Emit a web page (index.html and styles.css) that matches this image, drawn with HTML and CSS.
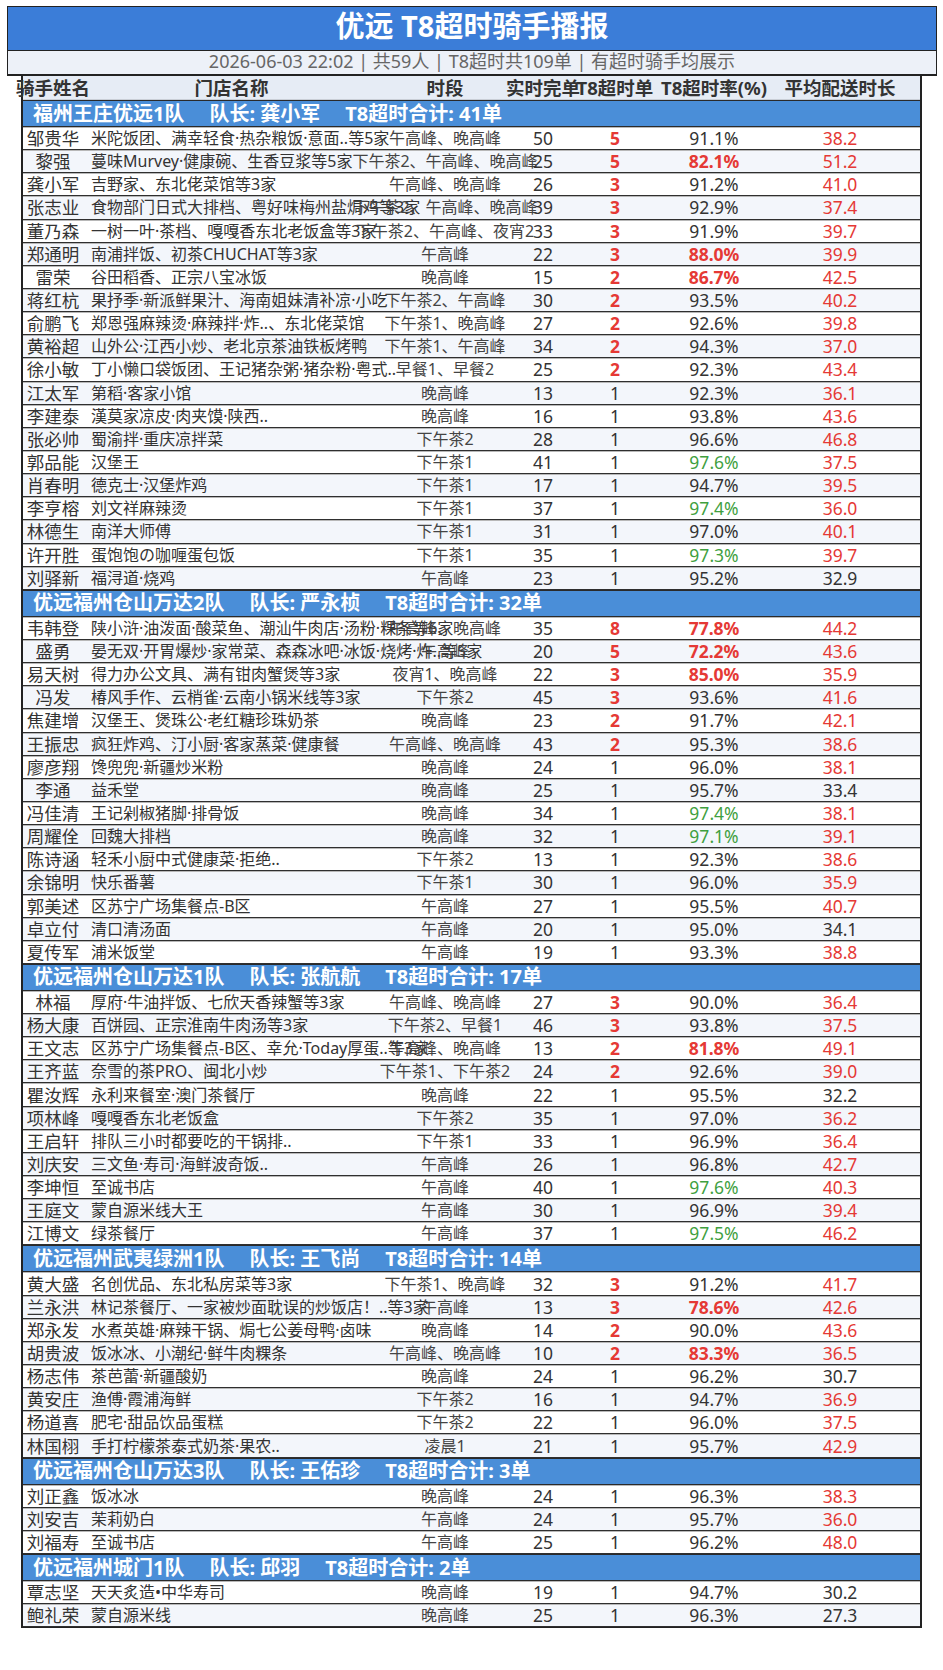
FILE: index.html
```html
<!DOCTYPE html>
<html lang="zh-CN">
<head>
<meta charset="utf-8">
<title>优远 T8超时骑手播报</title>
<link rel="stylesheet" href="styles.css">
</head>
<body>
<div class="page">
  <div class="title">优远 T8超时骑手播报</div>
  <div class="sub">2026-06-03 22:02 | 共59人 | T8超时共109单 | 有超时骑手均展示</div>
  <div class="table">
    <div class="head">
      <span class="c n">骑手姓名</span><span class="c s">门店名称</span><span class="c t">时段</span><span class="c q">实时完单</span><span class="c o">T8超时单</span><span class="c p">T8超时率(%)</span><span class="c v">平均配送时长</span>
    </div>

    <div class="grp"><span>福州王庄优远1队</span><span class="gap">队长: 龚小军</span><span class="gap">T8超时合计: 41单</span></div>
    <div class="row"><span class="c n">邹贵华</span><span class="c s">米陀饭团、满幸轻食·热杂粮饭·意面..等5家</span><span class="c t">午高峰、晚高峰</span><span class="c q">50</span><span class="c o hot">5</span><span class="c p">91.1%</span><span class="c v red">38.2</span></div>
    <div class="row alt"><span class="c n">黎强</span><span class="c s">蔓味Murvey·健康碗、生香豆浆等5家</span><span class="c t">下午茶2、午高峰、晚高峰</span><span class="c q">25</span><span class="c o hot">5</span><span class="c p hot">82.1%</span><span class="c v red">51.2</span></div>
    <div class="row"><span class="c n">龚小军</span><span class="c s">吉野家、东北佬菜馆等3家</span><span class="c t">午高峰、晚高峰</span><span class="c q">26</span><span class="c o hot">3</span><span class="c p">91.2%</span><span class="c v red">41.0</span></div>
    <div class="row alt"><span class="c n">张志业</span><span class="c s">食物部门日式大排档、粤好味梅州盐焗鸡等3家</span><span class="c t">下午茶2、午高峰、晚高峰</span><span class="c q">39</span><span class="c o hot">3</span><span class="c p">92.9%</span><span class="c v red">37.4</span></div>
    <div class="row"><span class="c n">董乃森</span><span class="c s">一树一叶·茶档、嘎嘎香东北老饭盒等3家</span><span class="c t">下午茶2、午高峰、夜宵2</span><span class="c q">33</span><span class="c o hot">3</span><span class="c p">91.9%</span><span class="c v red">39.7</span></div>
    <div class="row alt"><span class="c n">郑通明</span><span class="c s">南浦拌饭、初茶CHUCHAT等3家</span><span class="c t">午高峰</span><span class="c q">22</span><span class="c o hot">3</span><span class="c p hot">88.0%</span><span class="c v red">39.9</span></div>
    <div class="row"><span class="c n">雷荣</span><span class="c s">谷田稻香、正宗八宝冰饭</span><span class="c t">晚高峰</span><span class="c q">15</span><span class="c o hot">2</span><span class="c p hot">86.7%</span><span class="c v red">42.5</span></div>
    <div class="row alt"><span class="c n">蒋红杭</span><span class="c s">果抒季·新派鲜果汁、海南姐妹清补凉·小吃</span><span class="c t">下午茶2、午高峰</span><span class="c q">30</span><span class="c o hot">2</span><span class="c p">93.5%</span><span class="c v red">40.2</span></div>
    <div class="row"><span class="c n">俞鹏飞</span><span class="c s">郑恩强麻辣烫·麻辣拌·炸..、东北佬菜馆</span><span class="c t">下午茶1、晚高峰</span><span class="c q">27</span><span class="c o hot">2</span><span class="c p">92.6%</span><span class="c v red">39.8</span></div>
    <div class="row alt"><span class="c n">黄裕超</span><span class="c s">山外公·江西小炒、老北京茶油铁板烤鸭</span><span class="c t">下午茶1、午高峰</span><span class="c q">34</span><span class="c o hot">2</span><span class="c p">94.3%</span><span class="c v red">37.0</span></div>
    <div class="row"><span class="c n">徐小敏</span><span class="c s">丁小懒口袋饭团、王记猪杂粥·猪杂粉·粤式..</span><span class="c t">早餐1、早餐2</span><span class="c q">25</span><span class="c o hot">2</span><span class="c p">92.3%</span><span class="c v red">43.4</span></div>
    <div class="row alt"><span class="c n">江太军</span><span class="c s">第稻·客家小馆</span><span class="c t">晚高峰</span><span class="c q">13</span><span class="c o">1</span><span class="c p">92.3%</span><span class="c v red">36.1</span></div>
    <div class="row"><span class="c n">李建泰</span><span class="c s">漢莫家凉皮·肉夹馍·陕西..</span><span class="c t">晚高峰</span><span class="c q">16</span><span class="c o">1</span><span class="c p">93.8%</span><span class="c v red">43.6</span></div>
    <div class="row alt"><span class="c n">张必帅</span><span class="c s">蜀渝拌·重庆凉拌菜</span><span class="c t">下午茶2</span><span class="c q">28</span><span class="c o">1</span><span class="c p">96.6%</span><span class="c v red">46.8</span></div>
    <div class="row"><span class="c n">郭品能</span><span class="c s">汉堡王</span><span class="c t">下午茶1</span><span class="c q">41</span><span class="c o">1</span><span class="c p grn">97.6%</span><span class="c v red">37.5</span></div>
    <div class="row alt"><span class="c n">肖春明</span><span class="c s">德克士·汉堡炸鸡</span><span class="c t">下午茶1</span><span class="c q">17</span><span class="c o">1</span><span class="c p">94.7%</span><span class="c v red">39.5</span></div>
    <div class="row"><span class="c n">李亨榕</span><span class="c s">刘文祥麻辣烫</span><span class="c t">下午茶1</span><span class="c q">37</span><span class="c o">1</span><span class="c p grn">97.4%</span><span class="c v red">36.0</span></div>
    <div class="row alt"><span class="c n">林德生</span><span class="c s">南洋大师傅</span><span class="c t">下午茶1</span><span class="c q">31</span><span class="c o">1</span><span class="c p">97.0%</span><span class="c v red">40.1</span></div>
    <div class="row"><span class="c n">许开胜</span><span class="c s">蛋饱饱の咖喱蛋包饭</span><span class="c t">下午茶1</span><span class="c q">35</span><span class="c o">1</span><span class="c p grn">97.3%</span><span class="c v red">39.7</span></div>
    <div class="row alt"><span class="c n">刘驿新</span><span class="c s">福浔道·烧鸡</span><span class="c t">午高峰</span><span class="c q">23</span><span class="c o">1</span><span class="c p">95.2%</span><span class="c v">32.9</span></div>

    <div class="grp"><span>优远福州仓山万达2队</span><span class="gap">队长: 严永桢</span><span class="gap">T8超时合计: 32单</span></div>
    <div class="row"><span class="c n">韦韩登</span><span class="c s">陕小浒·油泼面·酸菜鱼、潮汕牛肉店·汤粉·粿条等6家</span><span class="c t">午高峰、晚高峰</span><span class="c q">35</span><span class="c o hot">8</span><span class="c p hot">77.8%</span><span class="c v red">44.2</span></div>
    <div class="row alt"><span class="c n">盛勇</span><span class="c s">晏无双·开胃爆炒·家常菜、森森冰吧·冰饭·烧烤·炸..等5家</span><span class="c t">午高峰</span><span class="c q">20</span><span class="c o hot">5</span><span class="c p hot">72.2%</span><span class="c v red">43.6</span></div>
    <div class="row"><span class="c n">易天树</span><span class="c s">得力办公文具、满有钳肉蟹煲等3家</span><span class="c t">夜宵1、晚高峰</span><span class="c q">22</span><span class="c o hot">3</span><span class="c p hot">85.0%</span><span class="c v red">35.9</span></div>
    <div class="row alt"><span class="c n">冯发</span><span class="c s">椿风手作、云梢雀·云南小锅米线等3家</span><span class="c t">下午茶2</span><span class="c q">45</span><span class="c o hot">3</span><span class="c p">93.6%</span><span class="c v red">41.6</span></div>
    <div class="row"><span class="c n">焦建增</span><span class="c s">汉堡王、煲珠公·老红糖珍珠奶茶</span><span class="c t">晚高峰</span><span class="c q">23</span><span class="c o hot">2</span><span class="c p">91.7%</span><span class="c v red">42.1</span></div>
    <div class="row alt"><span class="c n">王振忠</span><span class="c s">疯狂炸鸡、汀小厨·客家蒸菜·健康餐</span><span class="c t">午高峰、晚高峰</span><span class="c q">43</span><span class="c o hot">2</span><span class="c p">95.3%</span><span class="c v red">38.6</span></div>
    <div class="row"><span class="c n">廖彦翔</span><span class="c s">馋兜兜·新疆炒米粉</span><span class="c t">晚高峰</span><span class="c q">24</span><span class="c o">1</span><span class="c p">96.0%</span><span class="c v red">38.1</span></div>
    <div class="row alt"><span class="c n">李通</span><span class="c s">益禾堂</span><span class="c t">晚高峰</span><span class="c q">25</span><span class="c o">1</span><span class="c p">95.7%</span><span class="c v">33.4</span></div>
    <div class="row"><span class="c n">冯佳清</span><span class="c s">王记剁椒猪脚·排骨饭</span><span class="c t">晚高峰</span><span class="c q">34</span><span class="c o">1</span><span class="c p grn">97.4%</span><span class="c v red">38.1</span></div>
    <div class="row alt"><span class="c n">周耀佺</span><span class="c s">回魏大排档</span><span class="c t">晚高峰</span><span class="c q">32</span><span class="c o">1</span><span class="c p grn">97.1%</span><span class="c v red">39.1</span></div>
    <div class="row"><span class="c n">陈诗涵</span><span class="c s">轻禾小厨中式健康菜·拒绝..</span><span class="c t">下午茶2</span><span class="c q">13</span><span class="c o">1</span><span class="c p">92.3%</span><span class="c v red">38.6</span></div>
    <div class="row alt"><span class="c n">余锦明</span><span class="c s">快乐番薯</span><span class="c t">下午茶1</span><span class="c q">30</span><span class="c o">1</span><span class="c p">96.0%</span><span class="c v red">35.9</span></div>
    <div class="row"><span class="c n">郭美述</span><span class="c s">区苏宁广场集餐点-B区</span><span class="c t">午高峰</span><span class="c q">27</span><span class="c o">1</span><span class="c p">95.5%</span><span class="c v red">40.7</span></div>
    <div class="row alt"><span class="c n">卓立付</span><span class="c s">清口清汤面</span><span class="c t">午高峰</span><span class="c q">20</span><span class="c o">1</span><span class="c p">95.0%</span><span class="c v">34.1</span></div>
    <div class="row"><span class="c n">夏传军</span><span class="c s">浦米饭堂</span><span class="c t">午高峰</span><span class="c q">19</span><span class="c o">1</span><span class="c p">93.3%</span><span class="c v red">38.8</span></div>

    <div class="grp"><span>优远福州仓山万达1队</span><span class="gap">队长: 张航航</span><span class="gap">T8超时合计: 17单</span></div>
    <div class="row"><span class="c n">林福</span><span class="c s">厚府·牛油拌饭、七欣天香辣蟹等3家</span><span class="c t">午高峰、晚高峰</span><span class="c q">27</span><span class="c o hot">3</span><span class="c p">90.0%</span><span class="c v red">36.4</span></div>
    <div class="row alt"><span class="c n">杨大康</span><span class="c s">百饼园、正宗淮南牛肉汤等3家</span><span class="c t">下午茶2、早餐1</span><span class="c q">46</span><span class="c o hot">3</span><span class="c p">93.8%</span><span class="c v red">37.5</span></div>
    <div class="row"><span class="c n">王文志</span><span class="c s">区苏宁广场集餐点-B区、幸允·Today厚蛋..等3家</span><span class="c t">午高峰、晚高峰</span><span class="c q">13</span><span class="c o hot">2</span><span class="c p hot">81.8%</span><span class="c v red">49.1</span></div>
    <div class="row alt"><span class="c n">王齐蓝</span><span class="c s">奈雪的茶PRO、闽北小炒</span><span class="c t">下午茶1、下午茶2</span><span class="c q">24</span><span class="c o hot">2</span><span class="c p">92.6%</span><span class="c v red">39.0</span></div>
    <div class="row"><span class="c n">瞿汝辉</span><span class="c s">永利来餐室·澳门茶餐厅</span><span class="c t">晚高峰</span><span class="c q">22</span><span class="c o">1</span><span class="c p">95.5%</span><span class="c v">32.2</span></div>
    <div class="row alt"><span class="c n">项林峰</span><span class="c s">嘎嘎香东北老饭盒</span><span class="c t">下午茶2</span><span class="c q">35</span><span class="c o">1</span><span class="c p">97.0%</span><span class="c v red">36.2</span></div>
    <div class="row"><span class="c n">王启轩</span><span class="c s">排队三小时都要吃的干锅排..</span><span class="c t">下午茶1</span><span class="c q">33</span><span class="c o">1</span><span class="c p">96.9%</span><span class="c v red">36.4</span></div>
    <div class="row alt"><span class="c n">刘庆安</span><span class="c s">三文鱼·寿司·海鲜波奇饭..</span><span class="c t">午高峰</span><span class="c q">26</span><span class="c o">1</span><span class="c p">96.8%</span><span class="c v red">42.7</span></div>
    <div class="row"><span class="c n">李坤恒</span><span class="c s">至诚书店</span><span class="c t">午高峰</span><span class="c q">40</span><span class="c o">1</span><span class="c p grn">97.6%</span><span class="c v red">40.3</span></div>
    <div class="row alt"><span class="c n">王庭文</span><span class="c s">蒙自源米线大王</span><span class="c t">午高峰</span><span class="c q">30</span><span class="c o">1</span><span class="c p">96.9%</span><span class="c v red">39.4</span></div>
    <div class="row"><span class="c n">江博文</span><span class="c s">绿茶餐厅</span><span class="c t">午高峰</span><span class="c q">37</span><span class="c o">1</span><span class="c p grn">97.5%</span><span class="c v red">46.2</span></div>

    <div class="grp"><span>优远福州武夷绿洲1队</span><span class="gap">队长: 王飞尚</span><span class="gap">T8超时合计: 14单</span></div>
    <div class="row"><span class="c n">黄大盛</span><span class="c s">名创优品、东北私房菜等3家</span><span class="c t">下午茶1、晚高峰</span><span class="c q">32</span><span class="c o hot">3</span><span class="c p">91.2%</span><span class="c v red">41.7</span></div>
    <div class="row alt"><span class="c n">兰永洪</span><span class="c s">林记茶餐厅、一家被炒面耽误的炒饭店！..等3家</span><span class="c t">午高峰</span><span class="c q">13</span><span class="c o hot">3</span><span class="c p hot">78.6%</span><span class="c v red">42.6</span></div>
    <div class="row"><span class="c n">郑永发</span><span class="c s">水煮英雄·麻辣干锅、焗七公姜母鸭·卤味</span><span class="c t">晚高峰</span><span class="c q">14</span><span class="c o hot">2</span><span class="c p">90.0%</span><span class="c v red">43.6</span></div>
    <div class="row alt"><span class="c n">胡贵波</span><span class="c s">饭冰冰、小潮纪·鲜牛肉粿条</span><span class="c t">午高峰、晚高峰</span><span class="c q">10</span><span class="c o hot">2</span><span class="c p hot">83.3%</span><span class="c v red">36.5</span></div>
    <div class="row"><span class="c n">杨志伟</span><span class="c s">茶芭蕾·新疆酸奶</span><span class="c t">晚高峰</span><span class="c q">24</span><span class="c o">1</span><span class="c p">96.2%</span><span class="c v">30.7</span></div>
    <div class="row alt"><span class="c n">黄安庄</span><span class="c s">渔傅·霞浦海鲜</span><span class="c t">下午茶2</span><span class="c q">16</span><span class="c o">1</span><span class="c p">94.7%</span><span class="c v red">36.9</span></div>
    <div class="row"><span class="c n">杨道喜</span><span class="c s">肥宅·甜品饮品蛋糕</span><span class="c t">下午茶2</span><span class="c q">22</span><span class="c o">1</span><span class="c p">96.0%</span><span class="c v red">37.5</span></div>
    <div class="row alt"><span class="c n">林国栩</span><span class="c s">手打柠檬茶泰式奶茶·果农..</span><span class="c t">凌晨1</span><span class="c q">21</span><span class="c o">1</span><span class="c p">95.7%</span><span class="c v red">42.9</span></div>

    <div class="grp"><span>优远福州仓山万达3队</span><span class="gap">队长: 王佑珍</span><span class="gap">T8超时合计: 3单</span></div>
    <div class="row"><span class="c n">刘正鑫</span><span class="c s">饭冰冰</span><span class="c t">晚高峰</span><span class="c q">24</span><span class="c o">1</span><span class="c p">96.3%</span><span class="c v red">38.3</span></div>
    <div class="row alt"><span class="c n">刘安吉</span><span class="c s">茉莉奶白</span><span class="c t">午高峰</span><span class="c q">24</span><span class="c o">1</span><span class="c p">95.7%</span><span class="c v red">36.0</span></div>
    <div class="row"><span class="c n">刘福寿</span><span class="c s">至诚书店</span><span class="c t">午高峰</span><span class="c q">25</span><span class="c o">1</span><span class="c p">96.2%</span><span class="c v red">48.0</span></div>

    <div class="grp"><span>优远福州城门1队</span><span class="gap">队长: 邱羽</span><span class="gap">T8超时合计: 2单</span></div>
    <div class="row"><span class="c n">覃志坚</span><span class="c s">天天炙造•中华寿司</span><span class="c t">晚高峰</span><span class="c q">19</span><span class="c o">1</span><span class="c p">94.7%</span><span class="c v">30.2</span></div>
    <div class="row alt"><span class="c n">鲍礼荣</span><span class="c s">蒙自源米线</span><span class="c t">晚高峰</span><span class="c q">25</span><span class="c o">1</span><span class="c p">96.3%</span><span class="c v">27.3</span></div>
  </div>
</div>
</body>
</html>
```

FILE: styles.css
```css
html, body {
  margin: 0;
  padding: 0;
  background: #ffffff;
}

body {
  font-family: "Noto Sans", "Noto Sans CJK SC", sans-serif;
  color: #333333;
}

.page {
  padding: 6px 0 0 7px;
}

.title {
  box-sizing: border-box;
  width: 930px;
  height: 44px;
  background: #3b7dd8;
  border: 1px solid #222222;
  border-bottom: none;
  color: #ffffff;
  font-size: 29px;
  font-weight: 700;
  line-height: 38px;
  text-align: center;
}

.sub {
  box-sizing: border-box;
  width: 930px;
  height: 26px;
  background: #edf1f8;
  border: 1px solid #222222;
  border-bottom: 2px solid #222222;
  color: #666666;
  font-size: 18px;
  line-height: 21px;
  text-align: center;
}

.table {
  box-sizing: border-box;
  width: 901px;
  margin-left: 14px;
  border-left: 2px solid #222222;
  border-right: 2px solid #222222;
  border-bottom: 1px solid #222222;
}

.head {
  display: flex;
  align-items: center;
  height: 24px;
  box-sizing: border-box;
  background: #e6ecf5;
  border-bottom: 1px solid #c9ced6;
  font-size: 18.5px;
  font-weight: 700;
  color: #333333;
  line-height: 22px;
}

.grp {
  display: flex;
  align-items: center;
  box-sizing: border-box;
  height: 27px;
  padding-left: 10px;
  background: #4a8ed8;
  border-top: 1px solid #2a2a2a;
  border-bottom: 1px solid #2a2a2a;
  color: #ffffff;
  font-size: 20px;
  font-weight: 700;
  line-height: 24px;
  white-space: nowrap;
}

.grp .gap {
  margin-left: 25px;
}

.row {
  display: flex;
  align-items: center;
  box-sizing: border-box;
  height: 23.15px;
  background: #ffffff;
  border-bottom: 1px solid #2f2f2f;
  box-shadow: inset 0 1px 0 #b8b8b8;
  line-height: 20px;
}

.row.alt {
  background: #f3f6fb;
}

.c {
  display: flex;
  justify-content: center;
  flex: none;
  white-space: nowrap;
}

.n {
  width: 60px;
}

.s {
  width: 297px;
}

.t {
  width: 130px;
}

.q {
  width: 66px;
}

.o {
  width: 78px;
}

.p {
  width: 120px;
}

.v {
  width: 132px;
}

.row .n {
  font-size: 17.5px;
  color: #333333;
}

.row .s {
  justify-content: flex-start;
  box-sizing: border-box;
  padding-left: 8px;
  font-size: 16px;
  color: #333333;
}

.row .t {
  font-size: 16px;
  color: #444444;
}

.row .q,
.row .o,
.row .p,
.row .v {
  font-size: 17.5px;
  color: #333333;
}

.row .hot {
  color: #e53935;
  font-weight: 700;
}

.row .red {
  color: #e53935;
}

.row .grn {
  color: #3f9f3f;
}
```
